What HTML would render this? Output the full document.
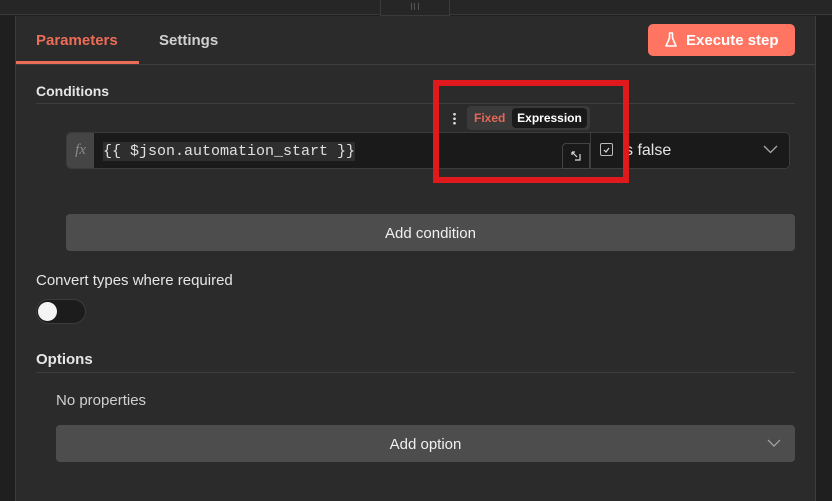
<!DOCTYPE html>
<html><head><meta charset="utf-8"><style>
*{margin:0;padding:0;box-sizing:border-box}
body{width:832px;height:501px;background:#1f1f1f;font-family:"Liberation Sans",sans-serif;position:relative;overflow:hidden;color:#e6e6e6}
.a{position:absolute}
</style></head><body>
<div class="a" style="left:0;top:0;width:832px;height:15px;background:#262626;border-bottom:1px solid #3a3a3a"></div>
<div class="a" style="left:380px;top:0;width:70px;height:16px;background:#262626;border:1px solid #3a3a3a;border-top:none"></div>
<div class="a" style="left:411px;top:3px;width:8px;height:7px;border-left:1px solid #555;border-right:1px solid #555"><div style="margin-left:2px;width:1px;height:7px;background:#555"></div></div>
<div class="a" style="left:15px;top:16px;width:801px;height:485px;background:#2b2b2b;border-left:1px solid #3c3c3c;border-right:1px solid #3c3c3c"></div>
<div class="a" style="left:16px;top:64px;width:799px;height:1px;background:#3e3e3e"></div>
<div class="a" style="left:36px;top:32px;font-size:15px;font-weight:bold;color:#ec6d57">Parameters</div>
<div class="a" style="left:16px;top:61px;width:123px;height:3px;background:#ec6d57"></div>
<div class="a" style="left:159px;top:32px;font-size:15px;font-weight:bold;color:#d0d0d0">Settings</div>
<div class="a" style="left:648px;top:24px;width:147px;height:32px;background:#ff7562;border-radius:5px;color:#fff;font-size:15px;font-weight:bold;line-height:34px;padding-left:38px">Execute step</div>
<svg class="a" style="left:664px;top:32px" width="14" height="16" viewBox="0 0 14 16"><path d="M5 1h4M5.5 1v5L2 14h10L8.5 6V1" fill="none" stroke="#fff" stroke-width="1.6" stroke-linejoin="round"/></svg>
<div class="a" style="left:36px;top:83px;font-size:14px;font-weight:bold">Conditions</div>
<div class="a" style="left:36px;top:103px;width:759px;height:1px;background:#3e3e3e"></div>
<div class="a" style="left:467px;top:106px;width:123px;height:24px;background:#3a3a3a;border-radius:4px"></div>
<div class="a" style="left:474px;top:111px;font-size:12px;font-weight:bold;color:#e4675a">Fixed</div>
<div class="a" style="left:512px;top:108px;width:75px;height:20px;background:#1a1a1a;border-radius:4px;font-size:12px;font-weight:bold;color:#fff;line-height:20px;text-align:center">Expression</div>
<div class="a" style="left:453px;top:112px;width:3px;height:13px;background:radial-gradient(circle,#ddd 1.2px,transparent 1.5px) 0 0/3px 4.5px"></div>
<div class="a" style="left:66px;top:132px;width:724px;height:37px;background:#1a1a1a;border:1px solid #3c3c3c;border-radius:5px"></div>
<div class="a" style="left:67px;top:133px;width:27px;height:35px;background:#454545;border-radius:4px 0 0 4px;color:#8a8a8a;font-family:'Liberation Serif',serif;font-style:italic;font-size:15px;line-height:35px;text-align:center">fx</div>
<div class="a" style="left:103px;top:142px;height:19px;background:#2e2e2e;font-family:'Liberation Mono',monospace;font-size:15px;color:#e0e0e0;line-height:19px">{{ $json.automation_start }}</div>
<div class="a" style="left:562px;top:143px;width:28px;height:26px;border:1px solid #444;border-radius:4px 0 0 0;background:#1a1a1a"></div>
<svg class="a" style="left:569px;top:149px" width="14" height="14" viewBox="0 0 14 14"><path d="M3 3l5 5M3 3h3M3 3v3M6 11h5V5" fill="none" stroke="#ddd" stroke-width="1.2"/></svg>
<div class="a" style="left:590px;top:133px;width:1px;height:35px;background:#3c3c3c"></div>
<div class="a" style="left:600px;top:143px;width:13px;height:13px;border:1.5px solid #bbb;border-radius:2px"></div>
<svg class="a" style="left:602px;top:145px" width="9" height="9"><path d="M2 5l2 2 3-4" fill="none" stroke="#ddd" stroke-width="1.2"/></svg>
<div class="a" style="left:625px;top:142px;font-size:16px;color:#e6e6e6">s false</div>
<svg class="a" style="left:763px;top:145px" width="15" height="9"><path d="M1 1l6.5 6.5L14 1" fill="none" stroke="#aaa" stroke-width="1.3"/></svg>
<div class="a" style="left:433px;top:80px;width:196px;height:103px;border:6px solid #e0191c"></div>
<div class="a" style="left:66px;top:214px;width:729px;height:37px;background:#4d4d4d;border-radius:4px;font-size:15px;line-height:39px;text-align:center;color:#f0f0f0">Add condition</div>
<div class="a" style="left:36px;top:272px;font-size:15px;color:#e6e6e6">Convert types where required</div>
<div class="a" style="left:36px;top:299px;width:50px;height:25px;background:#1c1c1c;border:1px solid #3c3c3c;border-radius:13px"></div>
<div class="a" style="left:38px;top:302px;width:19px;height:19px;background:#f4f4f4;border-radius:50%"></div>
<div class="a" style="left:36px;top:351px;font-size:15px;font-weight:bold">Options</div>
<div class="a" style="left:36px;top:372px;width:759px;height:1px;background:#3e3e3e"></div>
<div class="a" style="left:56px;top:392px;font-size:15px;color:#d0d0d0">No properties</div>
<div class="a" style="left:56px;top:425px;width:739px;height:37px;background:#4d4d4d;border-radius:4px;font-size:15px;line-height:39px;text-align:center;color:#f0f0f0">Add option</div>
<svg class="a" style="left:767px;top:439px" width="14" height="9"><path d="M1 1l6 6 6-6" fill="none" stroke="#aaa" stroke-width="1.2"/></svg>
</body></html>
